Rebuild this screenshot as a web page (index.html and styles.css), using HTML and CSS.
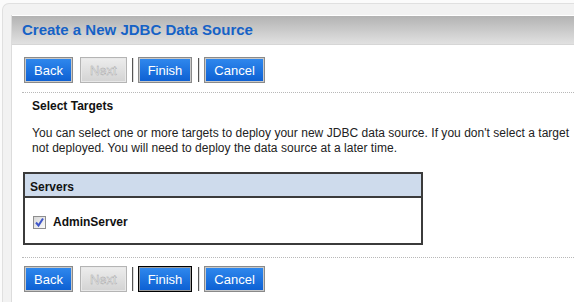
FILE: index.html
```html
<!DOCTYPE html>
<html lang="en">
<head>
    <meta charset="UTF-8">
    <meta name="viewport" content="width=device-width, initial-scale=1.0">
    <title>Create a New JDBC Data Source</title>
    <link rel="stylesheet" href="styles.css">
</head>
<body>
    <div class="frame">
        <div class="panel">
            <div class="header">
                <h1>Create a New JDBC Data Source</h1>
            </div>

            <div class="content">
                <!-- Botones superiores -->
                <div class="toolbar">
                    <button class="btn">Back</button>
                    <button class="btn" disabled>Next</button>
                    <span class="sep"></span>
                    <button class="btn">Finish</button>
                    <span class="sep"></span>
                    <button class="btn">Cancel</button>
                </div>

                <div class="rule"></div>

                <div class="section">
                    <h2>Select Targets</h2>
                    <p>You can select one or more targets to deploy your new JDBC data source. If you don't select a target<br>not deployed. You will need to deploy the data source at a later time.</p>
                </div>

                <div class="servers">
                    <div class="servers-head">Servers</div>
                    <div class="servers-row">
                        <span class="check">
                            <svg width="13" height="13" viewBox="0 0 13 13">
                                <polyline points="3,6.5 5.5,9.5 10,2.5" fill="none" stroke="#3f56c9" stroke-width="2"/>
                            </svg>
                        </span>
                        <span class="server-name">AdminServer</span>
                    </div>
                </div>

                <div class="rule rule-bottom"></div>

                <!-- Botones inferiores -->
                <div class="toolbar toolbar-bottom">
                    <button class="btn">Back</button>
                    <button class="btn" disabled>Next</button>
                    <span class="sep"></span>
                    <button class="btn focused">Finish</button>
                    <span class="sep"></span>
                    <button class="btn">Cancel</button>
                </div>
            </div>
        </div>
    </div>
</body>
</html>
```

FILE: styles.css
```css
html, body {
    height: 100%;
    overflow: hidden;
}
body {
    margin: 0;
    background: #fbfbfb;
    font-family: "Liberation Sans", Arial, sans-serif;
    font-size: 12px;
    color: #222;
}
.frame {
    box-sizing: border-box;
    height: calc(100% - 3px);
    margin: 3px 0 0 2px;
    padding: 11px 0 0 8px;
    border: 1px solid #e0e0e0;
    border-right: none;
    border-bottom: none;
    border-radius: 7px 0 0 0;
    background: #f2f2f2;
}
.panel {
    height: 100%;
    background: #fff;
    border-left: 1px solid #dcdcdc;
}
.header {
    height: 28px;
    border-top: 1px solid #fff;
    border-bottom: 1px solid #d6d6d6;
    background: linear-gradient(#b3b3b3, #e1e1e1);
}
h1 {
    margin: 0;
    padding-left: 10px;
    font-size: 15px;
    line-height: 28px;
    color: #1662c6;
}
.toolbar {
    display: flex;
    align-items: center;
    padding: 12px 0 0 12px;
}
.toolbar-bottom {
    padding-top: 8px;
}
.btn {
    box-sizing: border-box;
    height: 26px;
    margin-right: 7px;
    padding: 0 9px;
    font-family: "Liberation Sans", Arial, sans-serif;
    font-size: 13px;
    color: #fff;
    background: linear-gradient(#3089ee, #0c5fd2);
    border: 1px solid #8a8a8a;
    box-shadow: inset 0 0 0 1px #c9c9c9;
    border-radius: 0;
    cursor: pointer;
}
.btn:disabled {
    color: #f2f2f2;
    -webkit-text-stroke: 0.4px #a0a0a0;
    background: linear-gradient(#ededed, #d3d3d3);
    border-color: #b4b4b4;
    box-shadow: inset 0 0 0 1px #e8e8e8;
    cursor: default;
}
.btn.focused {
    border-color: #000;
    box-shadow: inset 0 0 0 1px #9c9c9c;
}
.sep {
    width: 1px;
    height: 24px;
    margin: 0 4px 0 -1px;
    background: #555;
    border-right: 1px solid #ddd;
}
.toolbar .btn:nth-child(2) {
    margin-right: 6px;
}
.rule {
    margin: 9px 0 0 10px;
    border-top: 1px dotted #b8b8b8;
}
.rule-bottom {
    margin-top: 12px;
}
.section {
    padding-left: 20px;
}
h2 {
    margin: 6px 0 0;
    font-size: 12px;
    line-height: 15px;
    color: #111;
}
p {
    margin: 12px 0 0;
    line-height: 15px;
    letter-spacing: 0.03px;
    white-space: nowrap;
    color: #222;
}
.servers {
    box-sizing: border-box;
    width: 400px;
    margin: 16px 0 0 11px;
    border: 2px solid #3b3b3b;
}
.servers-head {
    height: 24px;
    box-sizing: border-box;
    padding: 6px 0 0 5px;
    line-height: 15px;
    font-weight: bold;
    color: #111;
    background: #cedbec;
    border-bottom: 2px solid #3b3b3b;
}
.servers-row {
    display: flex;
    align-items: center;
    height: 45px;
    box-sizing: border-box;
    padding: 3px 0 0 8px;
}
.check {
    display: block;
    width: 13px;
    height: 13px;
    box-sizing: border-box;
    border: 1px solid #8e8e8e;
    background: linear-gradient(135deg, #d8d8d8, #fafafa);
}
.check svg {
    display: block;
    margin: -1px 0 0 -1px;
}
.server-name {
    margin-left: 7px;
    font-weight: bold;
    color: #111;
}
```
